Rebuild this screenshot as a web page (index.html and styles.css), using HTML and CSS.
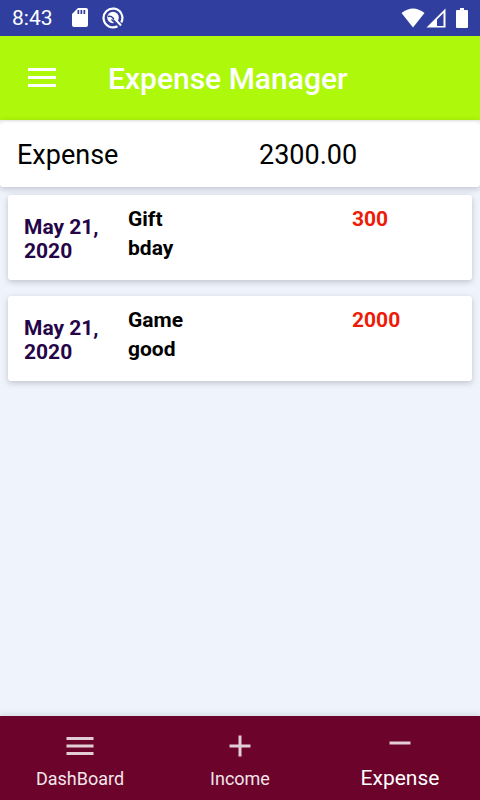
FILE: index.html
```html
<!DOCTYPE html>
<html lang="en">
<head>
<meta charset="utf-8">
<meta name="viewport" content="width=device-width, initial-scale=1">
<title>Expense Manager</title>
<link rel="stylesheet" href="styles.css">
</head>
<body>
<div class="status">
  <span class="clock">8:43</span>
  <svg class="sd" width="18" height="20" viewBox="0 0 18 20" aria-hidden="true">
    <path fill="#fff" d="M7 0h8q2 0 2 2v15q0 2-2 2H3q-2 0-2-2V6z"/>
    <path fill="#303f9f" d="M6.500 2h1.700v4H6.500zM9.500 2h1.700v4H9.500zM12.500 2h1.700v4h-1.700z"/>
  </svg>
  <svg class="app" width="22" height="22" viewBox="0 0 22 22" fill="none" stroke="#fff" aria-hidden="true">
    <path stroke-width="2.2" d="M15.500 19.200A9.400 9.400 0 1 1 19.200 15.500"/>
    <circle cx="11" cy="10.500" r="5.800" fill="#fff" stroke="none"/>
    <path stroke="#303f9f" stroke-width="1.500" d="M6 9.500Q9 8.500 11 11L15 16.500M9.500 12.500L13 16"/>
    <path stroke-width="2" d="M12.500 11.500l6.500 7"/>
  </svg>
  <div class="signals">
    <svg width="24" height="20" viewBox="0 0 24 20" aria-hidden="true"><path fill="#fff" d="M12 19.5L.5 5Q12-4 23.500 5z"/></svg>
    <svg width="20" height="20" viewBox="0 0 20 20" aria-hidden="true"><path fill="#fff" fill-rule="evenodd" d="M.5 19.500L19.500.5v19zM11 11.500v6.500h6.500V5z"/></svg>
    <svg class="battery" width="12" height="20" viewBox="0 0 12 20" aria-hidden="true"><path fill="#fff" d="M4 0h4v2h3q1 0 1 1v16q0 1-1 1H1q-1 0-1-1V3q0-1 1-1h3z"/></svg>
  </div>
</div>
<header class="toolbar">
  <button class="menu" type="button" aria-label="Open menu">
    <svg width="28" height="20" viewBox="0 0 28 20" aria-hidden="true"><path fill="#fff" d="M0 0h28v3H0zM0 8h28v3H0zM0 16h28v3H0z"/></svg>
  </button>
  <h1>Expense Manager</h1>
</header>
<main>
  <section class="total">
    <span>Expense</span>
    <span>2300.00</span>
  </section>
  <ul class="entries">
    <li class="entry">
      <time class="date" datetime="2020-05-21">May 21, 2020</time>
      <div class="what"><span>Gift</span><span>bday</span></div>
      <span class="amount">300</span>
    </li>
    <li class="entry">
      <time class="date" datetime="2020-05-21">May 21, 2020</time>
      <div class="what"><span>Game</span><span>good</span></div>
      <span class="amount">2000</span>
    </li>
  </ul>
</main>
<nav class="tabs">
  <a class="tab" href="#dashboard">
    <svg width="36" height="36" viewBox="0 0 24 24" aria-hidden="true"><path d="M3 18h18v-2H3v2zm0-5h18v-2H3v2zm0-7v2h18V6H3z"/></svg>
    <span>DashBoard</span>
  </a>
  <a class="tab" href="#income">
    <svg width="36" height="36" viewBox="0 0 24 24" aria-hidden="true"><path d="M19 13h-6v6h-2v-6H5v-2h6V5h2v6h6v2z"/></svg>
    <span>Income</span>
  </a>
  <a class="tab active" href="#expense" aria-current="page">
    <svg width="36" height="36" viewBox="0 0 24 24" aria-hidden="true"><path d="M19 13H5v-2h14v2z"/></svg>
    <span>Expense</span>
  </a>
</nav>
</body>
</html>
```
FILE: styles.css
```css
* {
  box-sizing: border-box;
}

body {
  margin: 0;
  min-height: 100vh;
  display: flex;
  flex-direction: column;
  background: #eff3fc;
  color: #000;
  font-family: Roboto, "Liberation Sans", sans-serif;
}

svg {
  display: block;
  flex: none;
}

.status {
  display: flex;
  align-items: center;
  height: 36px;
  padding: 0 12px;
  background: #303f9f;
  color: #fff;
  font-size: 21px;
}

.clock {
  line-height: 38px;
}

.sd {
  margin-left: 18px;
}

.app {
  margin-left: 13px;
}

.signals {
  display: flex;
  gap: 1px;
  margin-left: auto;
}

.battery {
  margin-left: 9px;
}

.toolbar {
  display: flex;
  align-items: center;
  height: 84px;
  padding: 0 24px;
  background: #aef80b;
  color: #fff;
}

.menu {
  padding: 4px;
  border: 0;
  background: none;
}

.toolbar h1 {
  margin: 0 0 0 48px;
  padding-top: 2px;
  font-size: 30px;
  line-height: 36px;
  font-weight: 500;
}

main {
  flex: 1;
}

.total {
  display: grid;
  grid-template-columns: 1fr 1fr;
  column-gap: 38px;
  padding: 19px 17px 16px;
  border-radius: 3px;
  background: #fff;
  box-shadow: 0 2px 6px rgba(0, 0, 0, 0.2), inset 0 3px 3px -2px rgba(0, 0, 0, 0.15);
  font-size: 27px;
  line-height: 32px;
}

.entries {
  display: grid;
  gap: 16px;
  margin: 0;
  padding: 8px;
  list-style: none;
  font-size: 21px;
  font-weight: 700;
}

.entry {
  display: grid;
  grid-template-columns: 80px 1fr 104px;
  column-gap: 24px;
  padding: 10px 16px 17px;
  border-radius: 3px;
  background: #fff;
  box-shadow: 0 2px 6px rgba(0, 0, 0, 0.2);
}

.date {
  padding-top: 10px;
  color: #260448;
  line-height: 24px;
}

.what {
  display: grid;
  align-content: start;
  line-height: 29px;
}

.amount {
  color: #ed1c08;
  line-height: 29px;
}

.tabs {
  display: grid;
  grid-template-columns: repeat(3, 1fr);
  height: 84px;
  background: #6c032b;
  box-shadow: 0 -2px 6px rgba(0, 0, 0, 0.1);
}

.tab {
  display: flex;
  flex-direction: column;
  align-items: center;
  padding-top: 12px;
  color: #f3e6ea;
  font-size: 18px;
  line-height: 30px;
  text-decoration: none;
}

.tab svg {
  fill: #e2cdd5;
}

.active {
  padding-top: 9px;
  color: #fff;
  font-size: 21px;
  line-height: 34px;
}
```
